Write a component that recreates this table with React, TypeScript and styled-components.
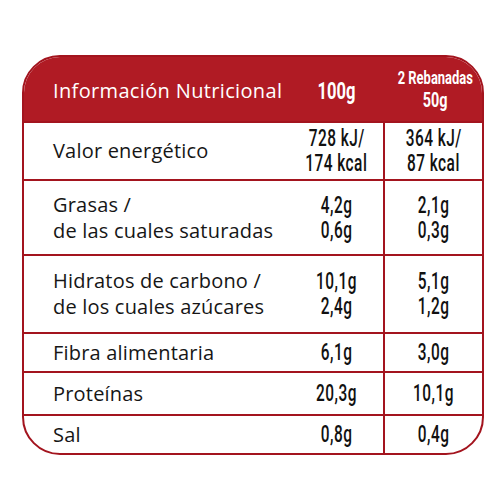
import React from 'react';
import styled, { createGlobalStyle } from 'styled-components';

const GlobalStyle = createGlobalStyle`
  body {
    margin: 0;
    background: #ffffff;
  }
`;

const Page = styled.div`
  width: 500px;
  height: 500px;
  padding: 55px 0 0 22px;
  box-sizing: border-box;
`;

const Card = styled.div`
  width: 462px;
  box-sizing: border-box;
  border: 2px solid #a3141e;
  border-radius: 38px;
  overflow: hidden;
  background: #ffffff;
`;

const HeaderRow = styled.div`
  display: grid;
  grid-template-columns: 266px 93px 1fr;
  align-items: center;
  height: 64px;
  background: #b01b24;
  color: #ffffff;
`;

const HeaderTitle = styled.div`
  padding-left: 29px;
  font-family: 'Open Sans', sans-serif;
  font-size: 20px;
  letter-spacing: 0.35px;
  padding-top: 2px;
`;

const HeaderValue = styled.div<{ $small?: boolean }>`
  display: flex;
  flex-direction: column;
  align-items: center;
  font-family: Roboto, sans-serif;
  font-weight: 700;
  font-size: ${(p) => (p.$small ? '18px' : '23px')};
  line-height: 22px;
  padding-top: ${(p) => (p.$small ? '0' : '6px')};
`;

const Row = styled.div<{ $h: number }>`
  display: grid;
  grid-template-columns: 266px 93px 1fr;
  align-items: center;
  height: ${(p) => p.$h}px;
  border-top: 2px solid #a3141e;
`;

const Label = styled.div`
  padding-left: 29px;
  font-family: 'Open Sans', sans-serif;
  font-size: 20px;
  letter-spacing: 0.2px;
  line-height: 26px;
  color: #161616;
`;

const Value = styled.div<{ $divider?: boolean }>`
  align-self: stretch;
  display: flex;
  flex-direction: column;
  justify-content: center;
  align-items: center;
  font-family: Roboto, sans-serif;
  font-weight: 500;
  font-size: 23px;
  letter-spacing: 0.7px;
  line-height: 25px;
  color: #111111;
  border-left: ${(p) => (p.$divider ? '2px solid #a3141e' : 'none')};
`;

const Narrow = styled.span<{ $size?: number; $scale?: number }>`
  display: inline-block;
  white-space: nowrap;
  transform: scaleX(${(p) => p.$scale ?? 0.67});
  font-size: ${(p) => (p.$size ? `${p.$size}px` : 'inherit')};
`;

type Line = string[];

const rows: { h: number; label: Line; per100: Line; perServing: Line }[] = [
  { h: 56, label: ['Valor energético'], per100: ['728 kJ/', '174 kcal'], perServing: ['364 kJ/', '87 kcal'] },
  { h: 73, label: ['Grasas /', 'de las cuales saturadas'], per100: ['4,2g', '0,6g'], perServing: ['2,1g', '0,3g'] },
  { h: 76, label: ['Hidratos de carbono /', 'de los cuales azúcares'], per100: ['10,1g', '2,4g'], perServing: ['5,1g', '1,2g'] },
  { h: 37, label: ['Fibra alimentaria'], per100: ['6,1g'], perServing: ['3,0g'] },
  { h: 41, label: ['Proteínas'], per100: ['20,3g'], perServing: ['10,1g'] },
  { h: 37, label: ['Sal'], per100: ['0,8g'], perServing: ['0,4g'] },
];

function Lines({ items }: { items: Line }) {
  return (
    <>
      {items.map((t) => (
        <div key={t}>{t}</div>
      ))}
    </>
  );
}

function NarrowLines({ items }: { items: Line }) {
  return (
    <>
      {items.map((t) => (
        <Narrow key={t}>{t}</Narrow>
      ))}
    </>
  );
}

export default function App() {
  return (
    <Page>
      <GlobalStyle />
      <Card>
        <HeaderRow>
          <HeaderTitle>Información Nutricional</HeaderTitle>
          <HeaderValue>
            <Narrow $scale={0.72}>100g</Narrow>
          </HeaderValue>
          <HeaderValue $small>
            <Narrow $scale={0.72}>2 Rebanadas</Narrow>
            <Narrow $scale={0.72} $size={20}>50g</Narrow>
          </HeaderValue>
        </HeaderRow>
        {rows.map((r) => (
          <Row key={r.label[0]} $h={r.h}>
            <Label>
              <Lines items={r.label} />
            </Label>
            <Value>
              <NarrowLines items={r.per100} />
            </Value>
            <Value $divider>
              <NarrowLines items={r.perServing} />
            </Value>
          </Row>
        ))}
      </Card>
    </Page>
  );
}
